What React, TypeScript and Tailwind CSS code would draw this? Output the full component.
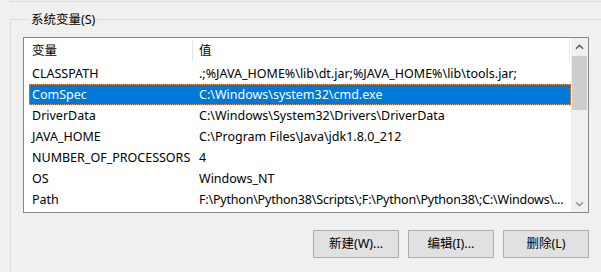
const rows = [
  { name: "CLASSPATH", value: ".;%JAVA_HOME%\\lib\\dt.jar;%JAVA_HOME%\\lib\\tools.jar;" },
  { name: "ComSpec", value: "C:\\Windows\\system32\\cmd.exe", selected: true },
  { name: "DriverData", value: "C:\\Windows\\System32\\Drivers\\DriverData" },
  { name: "JAVA_HOME", value: "C:\\Program Files\\Java\\jdk1.8.0_212" },
  { name: "NUMBER_OF_PROCESSORS", value: "4" },
  { name: "OS", value: "Windows_NT" },
  { name: "Path", value: "F:\\Python\\Python38\\Scripts\\;F:\\Python\\Python38\\;C:\\Windows\\...", tight: true },
];

function Chevron({ down, color }: { down?: boolean; color: string }) {
  return (
    <svg width="9" height="6" viewBox="0 0 9 6">
      <path
        d={down ? "M1 1.2 L4.5 4.6 L8 1.2" : "M1 4.8 L4.5 1.4 L8 4.8"}
        fill="none"
        stroke={color}
        strokeWidth="1.6"
      />
    </svg>
  );
}

export default function App() {
  return (
    <div
      className="w-[601px] h-[272px] bg-[#f0f0f0] overflow-hidden text-[12.5px] leading-[16px] text-black"
      style={{ fontFamily: '"Noto Sans", "Noto Sans CJK SC", sans-serif' }}
    >
      {/* bottom edge of the group above */}
      <div className="ml-[10px] h-[2px] border-l border-b border-[#dcdcdc]" />

      <fieldset className="ml-[10px] mt-[9px] h-[300px] min-w-0 border-l border-t border-[#dcdcdc] px-[12px]">
        <legend className="ml-[6px] px-[2px] pt-px">系统变量(S)</legend>

        <div className="mt-[9px] h-[176px] border border-[#828790] bg-white flex">
          <div className="flex-1 flex flex-col">
            {/* header */}
            <div className="h-[25px] flex">
              <div className="w-[168px] pl-[8px] flex items-center">变量</div>
              <div className="w-px my-[2px] bg-[#e5e5e5]" />
              <div className="flex-1 pl-[6px] flex items-center">值</div>
              <div className="w-px my-[2px] bg-[#e5e5e5] mr-px" />
            </div>

            {/* rows */}
            <div className="pl-[5px] flex flex-col">
              {rows.map((r) => (
                <div
                  key={r.name}
                  className={`w-[542px] h-[21px] flex items-center border border-dotted ${
                    r.selected ? "bg-[#0078d7] text-white border-[#e89a5a]" : "border-transparent"
                  }`}
                >
                  <div className="w-[162px] pl-[2px] whitespace-nowrap overflow-hidden">{r.name}</div>
                  <div
                    className={`flex-1 pl-[7px] whitespace-nowrap overflow-hidden ${
                      r.tight ? "tracking-[-0.2px]" : ""
                    }`}
                  >
                    {r.value}
                  </div>
                </div>
              ))}
            </div>
          </div>

          {/* scrollbar */}
          <div className="w-[17px] bg-[#f0f0f0] flex flex-col">
            <div className="h-[17px] flex items-center justify-center">
              <Chevron color="#606060" />
            </div>
            <div className="flex-1 pt-px">
              <div className="mx-px h-[54px] bg-[#cdcdcd]" />
            </div>
            <div className="h-[17px] flex items-center justify-center">
              <Chevron down color="#9a9a9a" />
            </div>
          </div>
        </div>

        <div className="mt-[17px] flex justify-end gap-[9px]">
          {["新建(W)...", "编辑(I)...", "删除(L)"].map((label) => (
            <button
              key={label}
              className="w-[86px] h-[28px] bg-[#e1e1e1] border border-[#adadad] flex items-center justify-center"
            >
              {label}
            </button>
          ))}
        </div>
      </fieldset>
    </div>
  );
}
